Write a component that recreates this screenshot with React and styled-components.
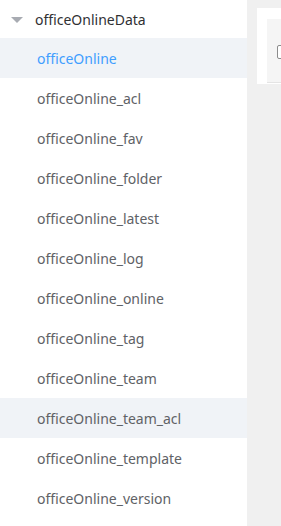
import React from 'react';
import styled, { createGlobalStyle } from 'styled-components';

const GlobalStyle = createGlobalStyle`
    html, body {
        margin: 0;
        padding: 0;
        height: 100%;
    }
    body {
        font-family: "Noto Sans", "Liberation Sans", sans-serif;
        background: #f0f0f0;
    }
    #root {
        height: 100%;
    }
`;

const tables = [
    'officeOnline',
    'officeOnline_acl',
    'officeOnline_fav',
    'officeOnline_folder',
    'officeOnline_latest',
    'officeOnline_log',
    'officeOnline_online',
    'officeOnline_tag',
    'officeOnline_team',
    'officeOnline_team_acl',
    'officeOnline_template',
    'officeOnline_version',
];

const Layout = styled.div`
    display: flex;
    height: 100%;
`;

const Sidebar = styled.aside`
    width: 247px;
    flex-shrink: 0;
    background: #fff;
    overflow: hidden;
`;

const TreeHead = styled.div`
    display: flex;
    align-items: center;
    height: 38px;
    padding-left: 11px;
    font-size: 14px;
    color: #303133;
    box-sizing: border-box;
`;

const Caret = styled.span`
    width: 0;
    height: 0;
    border-left: 6px solid transparent;
    border-right: 6px solid transparent;
    border-top: 6px solid #a8abb2;
    margin-right: 12px;
    margin-top: 1px;
`;

const TreeItem = styled.div`
    display: flex;
    align-items: center;
    height: 40px;
    padding-left: 37px;
    font-size: 14px;
    white-space: nowrap;
    color: ${(p) => (p.$active ? '#409eff' : '#606266')};
    background: ${(p) => (p.$active || p.$hover ? '#f0f3f7' : 'transparent')};
    cursor: pointer;
`;

const Main = styled.main`
    flex: 1;
    padding: 8px 0 0 10px;
    overflow: hidden;
`;

const Card = styled.div`
    background: #fff;
    height: 76px;
    padding: 11px 0 1px 10px;
    box-sizing: border-box;
`;

const Panel = styled.div`
    background: #f5f5f5;
    height: 64px;
    border-bottom: 1px solid #e4e4e4;
    padding: 26px 0 0 10px;
    box-sizing: border-box;
`;

const Check = styled.span`
    display: block;
    width: 13px;
    height: 12px;
    border: 1px solid #8c8c8c;
    border-radius: 2px;
    background: #fff;
`;

export default function App() {
    return (
        <>
            <GlobalStyle />
            <Layout>
                <Sidebar>
                    <TreeHead>
                        <Caret />
                        officeOnlineData
                    </TreeHead>
                    {tables.map((name, i) => (
                        <TreeItem key={name} $active={i === 0} $hover={name === 'officeOnline_team_acl'}>
                            {name}
                        </TreeItem>
                    ))}
                </Sidebar>
                <Main>
                    <Card>
                        <Panel>
                            <Check />
                        </Panel>
                    </Card>
                </Main>
            </Layout>
        </>
    );
}
